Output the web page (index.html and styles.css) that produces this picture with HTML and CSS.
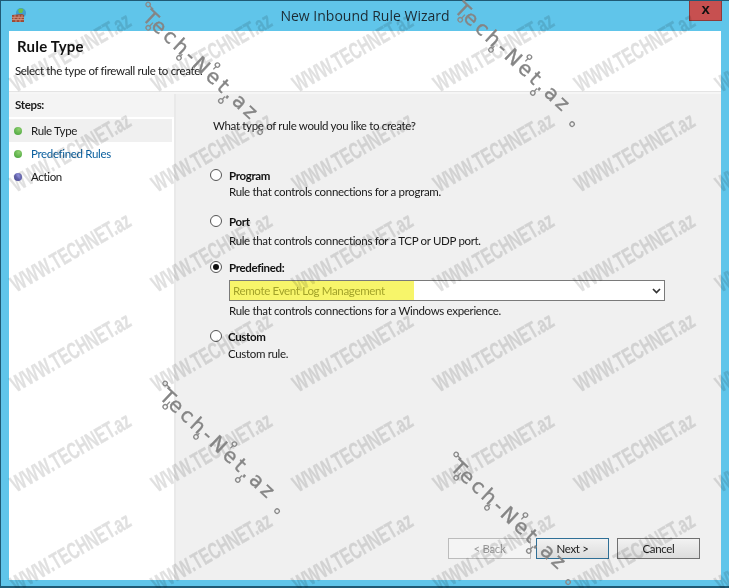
FILE: index.html
```html
<!DOCTYPE html>
<html lang="en">
<head>
  <meta charset="UTF-8">
  <title>New Inbound Rule Wizard</title>
  <link rel="stylesheet" href="styles.css">
</head>
<body>
  <div class="window">
    <div class="titlebar">
      <svg class="app-icon" width="18" height="18" viewBox="0 0 18 18">
        <circle cx="10" cy="6" r="5" fill="#3f9fd0"/>
        <path d="M7 2.5 Q10 0.5 12.5 2.5 L11 6 L8 6 Z" fill="#6cc04a"/>
        <path d="M1 8 L11 7 L13 8 L13 15 L1 15 Z" fill="#9c4a36"/>
        <path d="M1 10.3 H13 M1 12.6 H13 M4 8 V10.3 M8 8 V10.3 M11 8 V10.3 M3 10.3 V12.6 M7 10.3 V12.6 M10 10.3 V12.6 M5 12.6 V15 M9 12.6 V15" stroke="#d9a08c" stroke-width="0.8" fill="none"/>
      </svg>
      <div class="title">New Inbound Rule Wizard</div>
      <div class="close">x</div>
    </div>

    <div class="client">
      <div class="header">
        <h1>Rule Type</h1>
        <p>Select the type of firewall rule to create.</p>
      </div>
      <div class="main">
        <div class="steps">
          <div class="steps-title">Steps:</div>
          <div class="step current"><span class="dot green"></span>Rule Type</div>
          <div class="step link"><span class="dot green"></span>Predefined Rules</div>
          <div class="step"><span class="dot purple"></span>Action</div>
        </div>

        <div class="content">
          <div class="question">What type of rule would you like to create?</div>

          <div class="option option-program">
            <span class="radio"></span>
            <div class="option-body">
              <div class="option-name">Program</div>
              <div class="option-desc">Rule that controls connections for a program.</div>
            </div>
          </div>

          <div class="option option-port">
            <span class="radio"></span>
            <div class="option-body">
              <div class="option-name">Port</div>
              <div class="option-desc">Rule that controls connections for a TCP or UDP port.</div>
            </div>
          </div>

          <div class="option option-predefined">
            <span class="radio checked"></span>
            <div class="option-body">
              <div class="option-name">Predefined:</div>
              <div class="combo">
                <span class="combo-value">Remote Event Log Management</span>
                <svg class="combo-arrow" width="9" height="6" viewBox="0 0 9 6"><path d="M1 1 L4.5 4.5 L8 1" fill="none" stroke="#333" stroke-width="1.7"/></svg>
              </div>
              <div class="option-desc">Rule that controls connections for a Windows experience.</div>
            </div>
          </div>

          <div class="option option-custom">
            <span class="radio"></span>
            <div class="option-body">
              <div class="option-name">Custom</div>
              <div class="option-desc">Custom rule.</div>
            </div>
          </div>

          <div class="buttons">
            <button class="btn disabled">&lt; Back</button>
            <button class="btn default">Next &gt;</button>
            <button class="btn">Cancel</button>
          </div>
        </div>
      </div>
    </div>
  </div>

  <!-- Watermarks -->
  <div class="marks">
    <span>WWW.TECHNET.az</span><span>WWW.TECHNET.az</span><span>WWW.TECHNET.az</span><span>WWW.TECHNET.az</span><span>WWW.TECHNET.az</span><span>WWW.TECHNET.az</span>
    <span>WWW.TECHNET.az</span><span>WWW.TECHNET.az</span><span>WWW.TECHNET.az</span><span>WWW.TECHNET.az</span><span>WWW.TECHNET.az</span><span>WWW.TECHNET.az</span>
    <span>WWW.TECHNET.az</span><span>WWW.TECHNET.az</span><span>WWW.TECHNET.az</span><span>WWW.TECHNET.az</span><span>WWW.TECHNET.az</span><span>WWW.TECHNET.az</span>
    <span>WWW.TECHNET.az</span><span>WWW.TECHNET.az</span><span>WWW.TECHNET.az</span><span>WWW.TECHNET.az</span><span>WWW.TECHNET.az</span><span>WWW.TECHNET.az</span>
    <span>WWW.TECHNET.az</span><span>WWW.TECHNET.az</span><span>WWW.TECHNET.az</span><span>WWW.TECHNET.az</span><span>WWW.TECHNET.az</span><span>WWW.TECHNET.az</span>
    <span>WWW.TECHNET.az</span><span>WWW.TECHNET.az</span><span>WWW.TECHNET.az</span><span>WWW.TECHNET.az</span><span>WWW.TECHNET.az</span><span>WWW.TECHNET.az</span>
  </div>

  <svg class="logo logo-1" width="190" height="32" viewBox="0 0 190 32"><g fill="none" stroke="#8a8a8a" stroke-width="1.3"><circle cx="3" cy="6" r="2.2"/><path d="M5 6 H10"/><circle cx="19" cy="23" r="2.2"/><path d="M19 21 V16"/><circle cx="62" cy="24" r="2.2"/><path d="M62 22 V19"/><circle cx="95" cy="3" r="2.2"/><path d="M95 5 V9"/><circle cx="122" cy="27" r="2.2"/><path d="M122 25 V21"/><circle cx="172" cy="23" r="2.2"/></g><text x="8" y="21" class="logo-text">Tech-Net.az</text></svg>
  <svg class="logo logo-2" width="190" height="32" viewBox="0 0 190 32"><g fill="none" stroke="#8a8a8a" stroke-width="1.3"><circle cx="3" cy="6" r="2.2"/><path d="M5 6 H10"/><circle cx="19" cy="23" r="2.2"/><path d="M19 21 V16"/><circle cx="62" cy="24" r="2.2"/><path d="M62 22 V19"/><circle cx="95" cy="3" r="2.2"/><path d="M95 5 V9"/><circle cx="122" cy="27" r="2.2"/><path d="M122 25 V21"/><circle cx="172" cy="23" r="2.2"/></g><text x="8" y="21" class="logo-text">Tech-Net.az</text></svg>
  <svg class="logo logo-3" width="190" height="32" viewBox="0 0 190 32"><g fill="none" stroke="#8a8a8a" stroke-width="1.3"><circle cx="3" cy="6" r="2.2"/><path d="M5 6 H10"/><circle cx="19" cy="23" r="2.2"/><path d="M19 21 V16"/><circle cx="62" cy="24" r="2.2"/><path d="M62 22 V19"/><circle cx="95" cy="3" r="2.2"/><path d="M95 5 V9"/><circle cx="122" cy="27" r="2.2"/><path d="M122 25 V21"/><circle cx="172" cy="23" r="2.2"/></g><text x="8" y="21" class="logo-text">Tech-Net.az</text></svg>
  <svg class="logo logo-4" width="190" height="32" viewBox="0 0 190 32"><g fill="none" stroke="#8a8a8a" stroke-width="1.3"><circle cx="3" cy="6" r="2.2"/><path d="M5 6 H10"/><circle cx="19" cy="23" r="2.2"/><path d="M19 21 V16"/><circle cx="62" cy="24" r="2.2"/><path d="M62 22 V19"/><circle cx="95" cy="3" r="2.2"/><path d="M95 5 V9"/><circle cx="122" cy="27" r="2.2"/><path d="M122 25 V21"/><circle cx="172" cy="23" r="2.2"/></g><text x="8" y="21" class="logo-text">Tech-Net.az</text></svg>
</body>
</html>
```

FILE: styles.css
```css
html, body {
  margin: 0;
  height: 100%;
  overflow: hidden;
}

body {
  position: relative;
  font-family: 'Lato', 'Open Sans', sans-serif;
  font-size: 11.5px;
  letter-spacing: -0.33px;
  color: #1a1a1a;
  background: #fff;
}

.window {
  box-sizing: border-box;
  height: 588px;
  display: flex;
  flex-direction: column;
  background: #60c5ea;
  border: 1px solid #1f5a75;
  border-width: 1px 0 2px 1px;
  padding: 0 8px 6px 8px;
}

.titlebar {
  height: 30px;
  flex: none;
  display: flex;
  align-items: center;
  position: relative;
}

.app-icon {
  margin-left: 2px;
}

.title {
  position: absolute;
  left: 0;
  right: 0;
  top: 5px;
  text-align: center;
  font-family: 'Open Sans', sans-serif;
  font-size: 14px;
  letter-spacing: 0;
  color: #1c2b33;
}

.close {
  position: absolute;
  right: -1px;
  top: 0;
  width: 33px;
  height: 20px;
  box-sizing: border-box;
  background: #c75050;
  border: 1px solid #8f3a3a;
  border-top: none;
  text-align: center;
  font: bold 15px/15px 'Liberation Sans', sans-serif;
  color: #111;
}

.client {
  flex: 1;
  display: flex;
  flex-direction: column;
  background: #f0f0f0;
}

.header {
  height: 61px;
  flex: none;
  box-sizing: border-box;
  background: #fff;
  border-bottom: 1px solid #e4e4e4;
  padding: 6px 0 0 6px;
}

h1 {
  margin: 0 0 0 2px;
  font-size: 15px;
  line-height: 18px;
  font-weight: bold;
  letter-spacing: 0.2px;
  color: #111;
}

.header p {
  margin: 8px 0 0;
  line-height: 16px;
}

.main {
  flex: 1;
  display: flex;
  border-top: 2px solid #f6f6f6;
}

.steps {
  width: 167px;
  flex: none;
  background: #fff;
  border-right: 2px solid #e9e9e9;
  box-sizing: border-box;
}

.steps-title {
  height: 23px;
  line-height: 22px;
  padding-left: 6px;
  font-weight: bold;
  background: #f4f4f4;
  margin-bottom: 2px;
}

.step {
  height: 23px;
  line-height: 23px;
  display: flex;
  align-items: center;
  padding-left: 5px;
  width: 158px;
}

.step.current {
  background: #f0f0f0;
}

.step.link {
  color: #0a5f9e;
}

.dot {
  width: 8px;
  height: 8px;
  border-radius: 50%;
  margin-right: 9px;
}

.dot.green {
  background: radial-gradient(circle at 60% 30%, #8fd070, #3f9e35);
}

.dot.purple {
  background: radial-gradient(circle at 60% 30%, #8f8fd8, #4a4a9e);
}

.content {
  flex: 1;
  display: flex;
  flex-direction: column;
  padding: 0 0 0 37px;
}

.question {
  margin-top: 24px;
  line-height: 16px;
}

.option {
  display: flex;
}

.option-program { margin-top: 34px; }
.option-port { margin-top: 14px; }
.option-predefined { margin-top: 11px; }
.option-custom { margin-top: 10px; }

.option-port .option-desc { margin-top: 4px; }
.option-custom .option-desc { margin-top: 2px; }
.option-custom .option-body { margin-left: 2px; }

.radio {
  width: 10px;
  height: 10px;
  flex: none;
  margin: 1px 4px 0 -3px;
  border: 1px solid #555;
  border-radius: 50%;
  background: #fff;
  position: relative;
}

.radio.checked::after {
  content: "";
  position: absolute;
  left: 2px;
  top: 2px;
  width: 6px;
  height: 6px;
  border-radius: 50%;
  background: #111;
}

.option-body {
  margin-left: 3px;
}

.option-name {
  font-weight: bold;
  line-height: 15px;
  color: #111;
}

.option-desc {
  line-height: 16px;
  margin-top: 1px;
}

.combo {
  box-sizing: border-box;
  width: 436px;
  height: 21px;
  margin-top: 5px;
  background: #fff;
  border: 1px solid #7a7a7a;
  display: flex;
  justify-content: space-between;
  align-items: center;
  padding-right: 3px;
}

.combo-value {
  background: #f7f56a;
  color: #a3a32a;
  align-self: stretch;
  width: 184px;
  padding-left: 3px;
  box-sizing: border-box;
  line-height: 19px;
}

.combo + .option-desc {
  margin-top: 2px;
}

.buttons {
  margin-top: auto;
  margin-bottom: 21px;
  margin-right: 21px;
  display: flex;
  justify-content: flex-end;
  gap: 8px;
}

.btn {
  width: 83px;
  height: 21px;
  padding: 0;
  font: inherit;
  letter-spacing: inherit;
  color: #1a1a1a;
  background: linear-gradient(#f2f2f2, #dcdcdc);
  border: 1px solid #707070;
}

.btn.default {
  width: 73px;
  border-color: #2f6f96;
  margin-left: -3px;
}

.btn.disabled {
  background: #f4f4f4;
  border-color: #bcbcbc;
  color: #9a9a9a;
}

/* Filigrane */
.marks {
  position: absolute;
  left: 0;
  top: 0;
  width: 729px;
  height: 588px;
  overflow: hidden;
  display: grid;
  grid-template-columns: repeat(6, 141px);
  grid-auto-rows: 100px;
  pointer-events: none;
  mix-blend-mode: multiply;
}

.marks span {
  display: flex;
  justify-content: center;
  width: 141px;
  height: 20px;
  margin-top: 42px;
  white-space: nowrap;
  line-height: 20px;
  font-family: 'Liberation Sans', sans-serif;
  font-weight: bold;
  font-size: 23px;
  letter-spacing: 0;
  color: #e0e0e0;
  -webkit-text-stroke: 0.3px #e0e0e0;
  transform: rotate(-30deg) scaleX(0.65);
}

.logo {
  position: absolute;
  transform-origin: 0 0;
  transform: rotate(43deg);
}

.logo-1 { left: 150px; top: -2px; }
.logo-2 { left: 462px; top: -10px; }
.logo-3 { left: 167px; top: 377px; }
.logo-4 { left: 458px; top: 448px; }

.logo-text {
  font-family: 'DejaVu Sans', sans-serif;
  font-size: 20px;
  letter-spacing: 3.2px;
  fill: #858585;
  stroke: #858585;
  stroke-width: 0.4px;
}
```
